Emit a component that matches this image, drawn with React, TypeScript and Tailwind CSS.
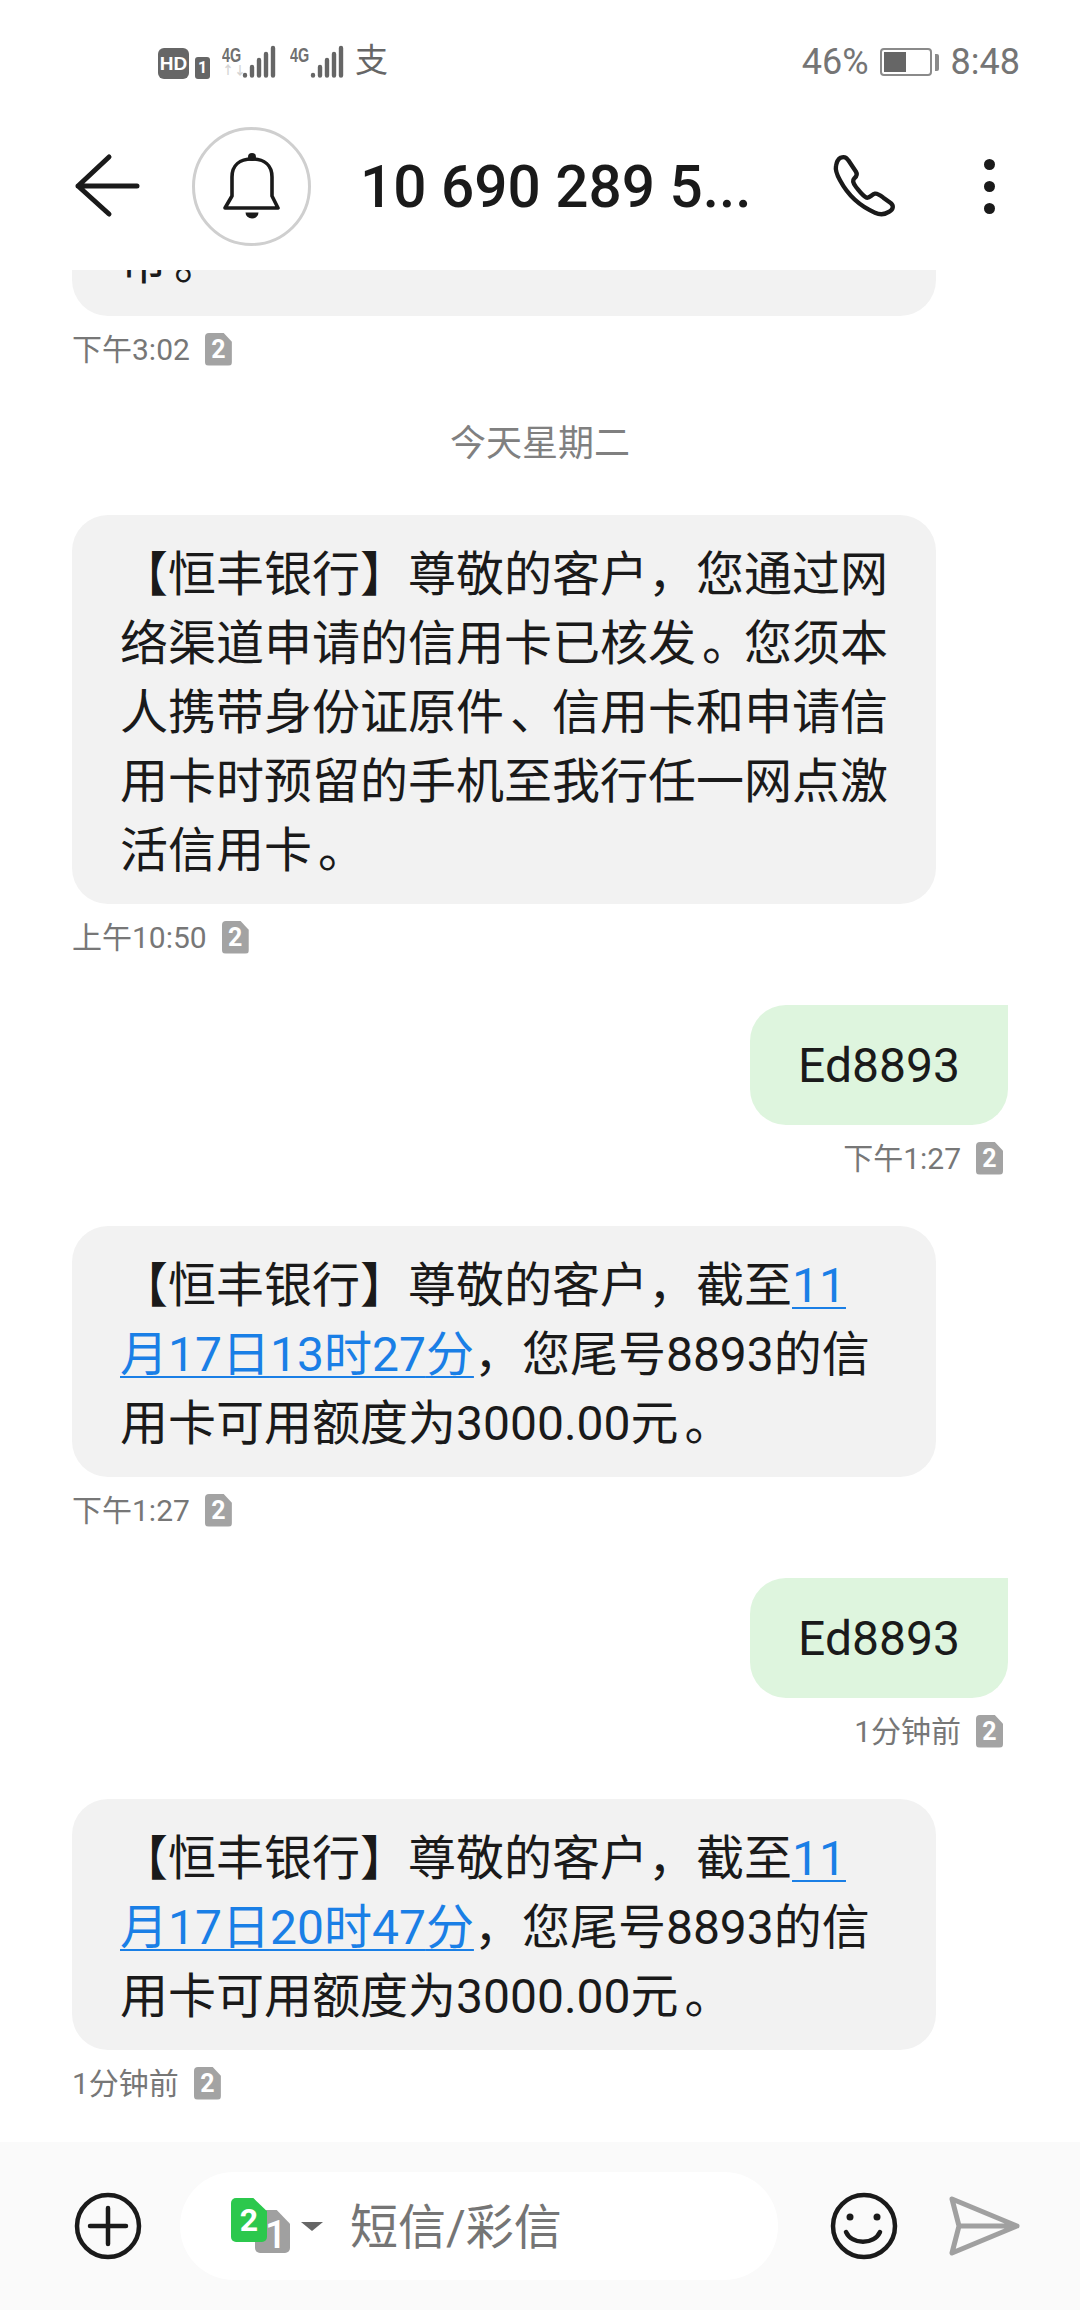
import React from 'react';

const FONT = "font-['Roboto','Noto_Sans_CJK_SC',sans-serif]";

const SimBadge = ({ n }: { n: string }) => (
  <span className="flex items-center justify-center w-[27px] h-[33px] rounded-[4px] bg-[#a3a3a3] text-white text-[25px] font-bold leading-none [clip-path:polygon(0_0,68%_0,100%_28%,100%_100%,0_100%)]">
    {n}
  </span>
);

const Stamp = ({ time, right }: { time: string; right?: boolean }) => (
  <div className={`mt-[13px] h-[40px] flex items-center gap-[15px] text-[30px] text-[#777777] ${right ? 'justify-end pr-[5px]' : ''}`}>
    <span>{time}</span>
    <SimBadge n="2" />
  </div>
);

// the phone's font centres these marks further right than Noto does
const Mark = ({ c }: { c: string }) => <span className="inline-block translate-x-[6px]">{c}</span>;

const Incoming = ({ children }: { children: React.ReactNode }) => (
  <div className="w-[864px] rounded-[36px] bg-[#f2f2f2] pl-[48px] pr-[46px] pt-[25px] pb-[19px] text-[48px] leading-[69px] text-[#1a1a1a]">
    {children}
  </div>
);

const Outgoing = ({ text }: { text: string }) => (
  <div className="flex justify-end">
    <div className="h-[120px] w-[258px] pt-[2px] flex items-center justify-center rounded-l-[36px] rounded-br-[36px] bg-[#def5de] text-[48px] text-[#1a1a1a]">
      {text}
    </div>
  </div>
);

const Bars = ({ dim }: { dim?: boolean }) => (
  <div className="flex items-end gap-[1px]">
    <div className="w-[19px] flex flex-col">
      <span className="text-[20px] leading-[17px] font-bold text-[#707070] origin-left scale-x-[.72] font-['Liberation_Sans',sans-serif]">4G</span>
      <span className={`text-[12px] leading-[15px] font-bold origin-left ${dim ? 'text-[#d4d4d4]' : 'text-transparent'}`}>↑↓</span>
    </div>
    <svg width="35" height="34" viewBox="0 0 35 34" stroke="#666666" strokeWidth="4.4" strokeLinecap="round">
      <path d="M3 30.500V30M10 30.500V22M17 30.500V15M24 30.500V9M31 30.500V3" />
    </svg>
  </div>
);

const BankMessage = ({ date }: { date: string }) => (
  <Incoming>
    【恒丰银行】尊敬的客户，截至<span className="text-[#1a7fe6] underline decoration-[2px] underline-offset-[5px]">11月17日{date}分</span>，您尾号8893的信用卡可用额度为3000.00元<Mark c="。" />
  </Incoming>
);

export default function App() {
  return (
    <div className={`w-[1080px] h-[2310px] flex flex-col overflow-hidden bg-white ${FONT}`}>
      {/* status bar */}
      <div className="h-[90px] shrink-0 flex items-center justify-between pl-[158px] pr-[60px] pt-[34px]">
        <div className="flex items-end gap-[6px] h-[33px]">
          <span className="flex items-center justify-center w-[31px] h-[31px] rounded-[6px] bg-[#666666] text-white text-[19px] font-bold leading-none font-['Liberation_Sans',sans-serif]">HD</span>
          <span className="flex items-center justify-center w-[15px] h-[22px] rounded-[3px] bg-[#666666] text-white text-[16px] font-bold leading-none mr-[6px]">1</span>
          <Bars dim />
          <span className="w-[1px]" />
          <Bars />
          <span className="ml-[4px] text-[33px] leading-[36px] text-[#666666]">支</span>
        </div>
        <div className="flex items-center text-[36px] text-[#757575]">
          <span>46%</span>
          <div className="ml-[11px] flex items-center">
            <div className="w-[52px] h-[28px] rounded-[4px] border-[2px] border-[#8a8a8a] p-[2px]">
              <div className="h-full w-[22px] bg-[#666666]" />
            </div>
            <div className="ml-[3px] w-[4px] h-[17px] rounded-r-[2px] bg-[#8a8a8a]" />
          </div>
          <span className="ml-[12px]">8:48</span>
        </div>
      </div>

      {/* header */}
      <div className="h-[180px] shrink-0 flex items-center pl-[74px] pt-[12px]">
        <svg width="68" height="66" viewBox="74 153 68 66" fill="none" stroke="#1a1a1a" strokeWidth="5" strokeLinecap="round" strokeLinejoin="round">
          <path d="M109 157 L78 186 L109 214 M78 186 H137" />
        </svg>
        <div className="ml-[50px] w-[119px] h-[119px] rounded-full border-[3px] border-[#cfcfcf] shrink-0 flex items-center justify-center">
          <svg width="112" height="112" viewBox="3 3 112 112" fill="none">
            <circle cx="59" cy="30" r="4" fill="#1a1a1a" />
            <path d="M32 81 L39 69 V50 C39 38 47 32 59 32 C71 32 79 38 79 50 V69 L85 81 Z" stroke="#1a1a1a" strokeWidth="3.6" strokeLinejoin="round" />
            <path d="M52.500 85.500 H65.500 A6.500 6 0 0 1 52.500 85.500 Z" fill="#1a1a1a" />
          </svg>
        </div>
        <div className="ml-[49px] w-[443px] pt-[3px] text-[58.5px] font-medium leading-none text-[#1a1a1a] whitespace-nowrap">10 690 289 5...</div>
        <svg className="ml-[27px]" width="70" height="70" viewBox="30 30 210 210" fill="none" stroke="#1a1a1a" strokeWidth="13" strokeLinejoin="round">
          <path d="M62 50 C72 46 80 50 85 58 L108 92 C113 100 110 106 103 112 C95 120 100 128 108 138 C118 150 128 165 140 170 C150 172 155 160 165 158 C172 157 180 162 190 170 L212 186 C222 194 220 205 208 212 C196 220 180 222 165 215 C125 198 85 165 60 118 C50 100 46 85 48 75 C50 62 55 54 62 50 Z" />
        </svg>
        <div className="ml-[84px] flex flex-col gap-[11px]">
          <div className="w-[11px] h-[11px] rounded-full bg-[#1a1a1a]" />
          <div className="w-[11px] h-[11px] rounded-full bg-[#1a1a1a]" />
          <div className="w-[11px] h-[11px] rounded-full bg-[#1a1a1a]" />
        </div>
      </div>

      {/* messages, scrolled so the first bubble is cut off at the top */}
      <div className="flex-1 overflow-hidden px-[72px]">
        <div className="-mt-[67px]">
          <Incoming>
            币<Mark c="。" />
          </Incoming>
          <Stamp time="下午3:02" />

          <div className="mt-[53px] h-[44px] flex items-center justify-center text-[36px] text-[#808080]">今天星期二</div>

          <div className="mt-[49px]">
            <Incoming>
              【恒丰银行】尊敬的客户，您通过网络渠道申请的信用卡已核发<Mark c="。" />您须本人携带身份证原件<Mark c="、" />信用卡和申请信用卡时预留的手机至我行任一网点激活信用卡<Mark c="。" />
            </Incoming>
          </div>
          <Stamp time="上午10:50" />

          <div className="mt-[48px]">
            <Outgoing text="Ed8893" />
          </div>
          <Stamp time="下午1:27" right />

          <div className="mt-[48px]">
            <BankMessage date="13时27" />
          </div>
          <Stamp time="下午1:27" />

          <div className="mt-[48px]">
            <Outgoing text="Ed8893" />
          </div>
          <Stamp time="1分钟前" right />

          <div className="mt-[48px]">
            <BankMessage date="20时47" />
          </div>
          <Stamp time="1分钟前" />
        </div>
      </div>

      {/* compose bar */}
      <div className="h-[168px] shrink-0 flex items-center bg-[#fafafa] pl-[74px]">
        <svg width="68" height="68" viewBox="0 0 68 68" fill="none" stroke="#1a1a1a" strokeWidth="4.500" strokeLinecap="round">
          <circle cx="34" cy="34" r="31" />
          <path d="M34 16 V52 M16 34 H52" />
        </svg>
        <div className="ml-[38px] w-[598px] h-[108px] rounded-full bg-white flex items-center pl-[51px]">
          <div className="relative w-[60px] h-[56px] shrink-0">
            <span className="absolute left-[24px] top-[12px] w-[35px] h-[43px] pl-[10px] rounded-[5px] bg-[#a0a0a0] text-white text-[38px] font-medium leading-[50px] [clip-path:polygon(0_0,62%_0,100%_32%,100%_100%,0_100%)]">1</span>
            <span className="absolute left-0 top-0 w-[36px] h-[44px] flex items-center justify-center rounded-[5px] bg-[#2cc84d] text-white text-[32px] font-bold leading-none [clip-path:polygon(0_0,62%_0,100%_30%,100%_100%,0_100%)]">2</span>
          </div>
          <svg className="ml-[10px]" width="22" height="9" viewBox="0 0 22 9">
            <path d="M0 0 H22 L11 9 Z" fill="#666666" />
          </svg>
          <span className="ml-[27px] pt-[3px] text-[48px] text-[#757575]">短信/彩信</span>
        </div>
        <svg className="ml-[52px]" width="68" height="68" viewBox="0 0 68 68" fill="none" stroke="#1a1a1a" strokeWidth="4.500" strokeLinecap="round">
          <circle cx="34" cy="34" r="31" />
          <circle cx="20" cy="25" r="3.500" fill="#1a1a1a" stroke="none" />
          <circle cx="47" cy="25" r="3.500" fill="#1a1a1a" stroke="none" />
          <path d="M16 40 C22 53 44 53 50 40" />
        </svg>
        <svg className="ml-[51px]" width="72" height="60" viewBox="0 0 72 60" fill="none" stroke="#a0a0a0" strokeWidth="5" strokeLinejoin="round" strokeLinecap="round">
          <path d="M3 3 L68 30 L3 57 L10 30 Z M10 30 H68" />
        </svg>
      </div>
    </div>
  );
}
